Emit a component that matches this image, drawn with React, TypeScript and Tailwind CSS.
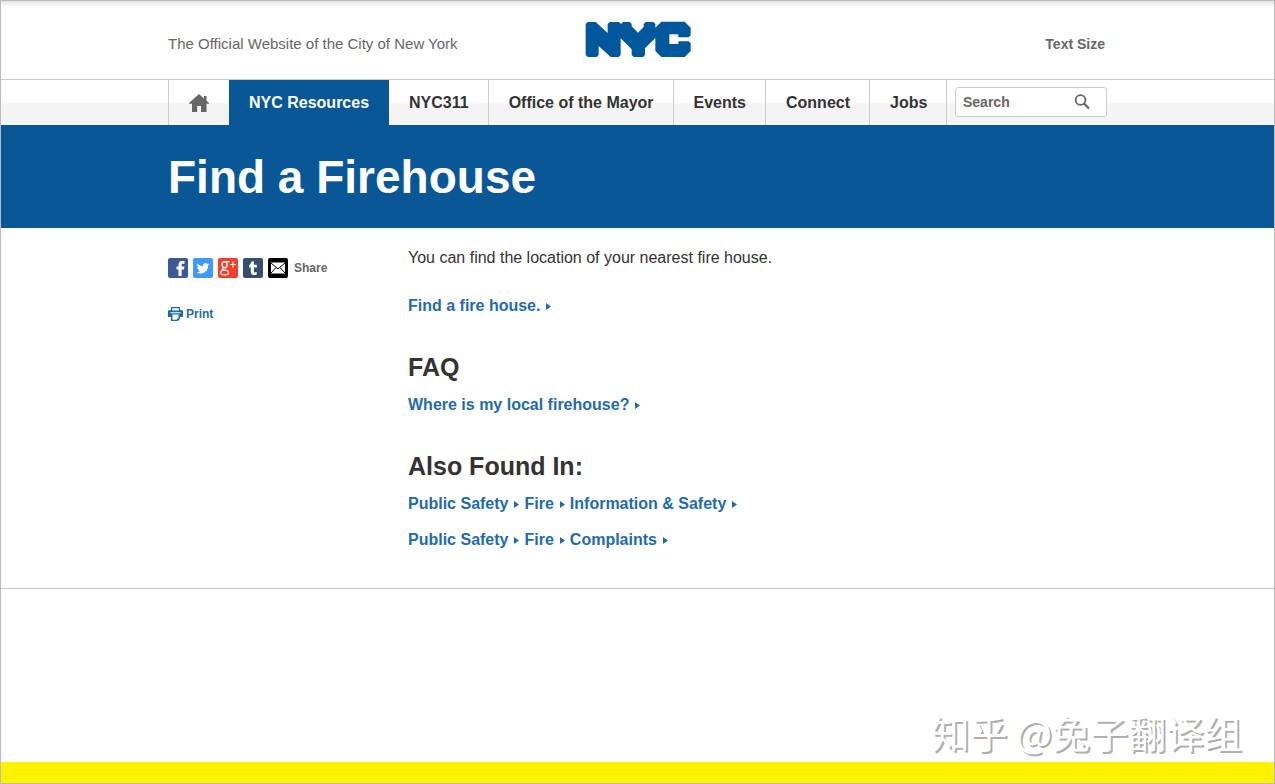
import { useState } from 'react';

type Crumb = { label: string; href: string };

const navItems = [
  { label: 'NYC Resources', active: true },
  { label: 'NYC311' },
  { label: 'Office of the Mayor' },
  { label: 'Events' },
  { label: 'Connect' },
  { label: 'Jobs' },
];

const categories: Crumb[][] = [
  [
    { label: 'Public Safety', href: '#public-safety' },
    { label: 'Fire', href: '#fire' },
    { label: 'Information & Safety', href: '#information' },
  ],
  [
    { label: 'Public Safety', href: '#public-safety' },
    { label: 'Fire', href: '#fire' },
    { label: 'Complaints', href: '#complaints' },
  ],
];

function ArrowLink({ label, href }: Crumb) {
  return (
    <a href={href} className="inline-flex items-center gap-[6px] font-bold text-[#1f6bae] hover:underline">
      {label}
      <svg className="mt-px h-[7px] w-[5px]" viewBox="0 0 5 7" fill="currentColor" aria-hidden="true">
        <path d="M0 0 5 3.500 0 7Z" />
      </svg>
    </a>
  );
}

function Logo() {
  return (
    <svg className="h-[37px] w-[107px] overflow-visible" viewBox="40 66 321 111" fill="#00579c" aria-hidden="true">
      <path d="M48 72 54 66H78L114 99V72L120 66H148L154 72 160 66H180L186 72V79L205 98 222 81V72L228 66H251L257 72V83L275 65H345L363 83V106L357 112H326V103H299V132H326V124H357L363 130V153L345 171H275L257 153V114L226 145V165L220 171H192L186 165V148L153 115V165L147 171H123L87 138V165L81 171H54L48 165Z" />
    </svg>
  );
}

function HomeIcon() {
  return (
    <svg className="h-[18px] w-5" viewBox="0 0 20 18" fill="#666" aria-hidden="true">
      <path d="M10 0 15 4.500V2h2.500v4.800L20 9v.8h-2.500V18H12v-6H8.200v6H3V9.800H0V9Z" />
    </svg>
  );
}

function ShareLinks() {
  const box = 'block h-5 w-5 overflow-hidden rounded-[2px]';
  return (
    <div className="flex items-center gap-[6px]">
      <div className="flex gap-[5px]">
        <a href="#facebook" aria-label="Facebook" className={`${box} bg-[#3b5998]`}>
          <svg viewBox="0 0 20 20" fill="#fff">
            <path d="M10.500 18v-6.500H8.500V8.500h2V6.800c0-2.500 1.400-3.800 3.700-3.800h2.300v2.800H15c-1.100 0-1.400.5-1.400 1.300v1.400h2.800l-.4 3h-2.400V18Z" />
          </svg>
        </a>
        <a href="#twitter" aria-label="Twitter" className={`${box} bg-[#4099ff]`}>
          <svg viewBox="0 0 20 20" fill="#fff">
            <path d="M16.300 6.200c-.5.2-.9.3-1.400.4.5-.3.9-.8 1.100-1.400-.5.3-1 .5-1.600.6a2.600 2.600 0 0 0-4.400 2.400C7.800 8.100 5.900 7.100 4.600 5.500c-.7 1.200-.3 2.700.8 3.500-.4 0-.8-.1-1.200-.3 0 1.200.9 2.300 2.100 2.600-.4.1-.8.1-1.200 0 .3 1 1.300 1.800 2.400 1.800-1.100.9-2.500 1.300-3.900 1.100C8.500 17.300 15.100 14.500 15.100 7.600c.5-.4.9-.8 1.200-1.400Z" />
          </svg>
        </a>
        <a href="#google" aria-label="Google Plus" className={`${box} bg-[#f63e28]`}>
          <svg viewBox="0 0 20 20" fill="none" stroke="#fff" strokeWidth="1.100">
            <ellipse cx="6.600" cy="6.700" rx="2.500" ry="3" strokeWidth="1.400" />
            <path d="M7 3.600h4.500M5.500 9.600c-2 1.200-1.500 2 .5 2.300 3 .4 4.600.8 4.600 2.500 0 1.600-1.900 2.500-4.200 2.500S2.700 16 2.700 14.500c0-1.300 1.300-2.200 3.300-2.600M12 6.500h6M15 3.500v6" />
          </svg>
        </a>
        <a href="#tumblr" aria-label="Tumblr" className={`${box} bg-[#35506b]`}>
          <svg viewBox="0 0 20 20" fill="#fff">
            <path d="M8.200 3.500h2.700v3.300h2.900v2.600h-2.900v3.800c0 1.400 1.300 1.500 2.800.7v2.500c-2.900 1.300-5.900.5-5.900-2.500V9.400H6V7.200C7.400 6.700 8.100 5.400 8.200 3.500Z" />
          </svg>
        </a>
        <a href="#email" aria-label="Email" className={`${box} bg-black`}>
          <svg viewBox="0 0 20 20">
            <path fill="#fff" d="M3 4.500h14v11H3Z" />
            <path fill="none" stroke="#000" d="m3 5 7 6 7-6M3 15l5-5.500M17 15l-5-5.500" />
          </svg>
        </a>
      </div>
      <span className="text-xs font-bold text-[#666]">Share</span>
    </div>
  );
}

function PrintIcon() {
  return (
    <svg className="h-[14px] w-[15px]" viewBox="0 0 15 14" aria-hidden="true">
      <path fill="#1f6bae" d="M3 0h9v3h2l1 1v6h-3v2l-2 2H3v-4H0V4l1-1h2Z" />
      <path fill="#fff" d="M4.200 1.200h6.600V3.400H4.200ZM2.500 5.200h10v1h-10ZM4.500 7.600h6v3.900H8.800v1.300H4.500Z" />
    </svg>
  );
}

export default function App() {
  const [query, setQuery] = useState('');

  return (
    <div className="relative flex min-h-screen flex-col border border-[#bbb] bg-white font-['Liberation_Sans',Arial,sans-serif] text-base text-[#333]">
      {/* Top bar */}
      <header className="bg-linear-to-b from-[#e4e4e4] to-white to-[6px]">
        <div className="mx-auto flex h-[78px] max-w-[939px] items-center">
          <p className="flex-1 pt-2 text-[15px] text-[#666]">The Official Website of the City of New York</p>
          <a href="#nyc" aria-label="NYC">
            <Logo />
          </a>
          <div className="flex flex-1 justify-end pt-2 pr-[2px]">
            <button type="button" className="text-sm font-bold text-[#666]">
              Text Size
            </button>
          </div>
        </div>
      </header>

      {/* Navigation */}
      <nav className="border-t border-[#ccc] bg-linear-to-b from-white from-48% to-[#f4f4f4] to-54%">
        <div className="mx-auto flex h-[45px] max-w-[939px]">
          <a href="#home" aria-label="Home" className="flex w-[61px] items-center justify-center border-l border-[#ccc]">
            <HomeIcon />
          </a>
          {navItems.map((item) => (
            <a
              key={item.label}
              href="#nav"
              className={
                item.active
                  ? 'flex items-center bg-[#095796] px-5 font-bold whitespace-nowrap text-white'
                  : 'flex items-center border-r border-[#ccc] pr-[19px] pl-5 font-bold whitespace-nowrap'
              }
            >
              {item.label}
            </a>
          ))}
          <form className="ml-auto pt-[7px]" onSubmit={(e) => e.preventDefault()}>
            <div className="flex h-[30px] w-[152px] items-center rounded-[3px] border border-[#ccc] bg-white">
              <input
                type="text"
                aria-label="Search"
                placeholder="Search"
                value={query}
                onChange={(e) => setQuery(e.target.value)}
                className="w-full min-w-0 flex-1 px-[7px] text-sm font-bold text-[#666] outline-none placeholder:text-[#666]"
              />
              <button type="submit" aria-label="Submit search" className="mr-4">
                <svg className="h-4 w-4" viewBox="0 0 16 16" fill="none" stroke="#666" strokeWidth="1.800">
                  <circle cx="6.500" cy="6" r="4.900" />
                  <path strokeWidth="2.200" d="m10 9.500 5 5" />
                </svg>
              </button>
            </div>
          </form>
        </div>
      </nav>

      {/* Page title */}
      <div className="bg-[#095796]">
        <div className="mx-auto flex h-[103px] max-w-[939px] items-center pt-0.5">
          <h1 className="text-[46px] font-bold text-white">Find a Firehouse</h1>
        </div>
      </div>

      {/* Content */}
      <main className="border-b border-[#c4c4c4]">
        <div className="mx-auto flex max-w-[939px] pb-9">
          <aside className="w-[240px] shrink-0 pt-[30px]">
            <ShareLinks />
            <a href="#print" className="mt-7 inline-flex items-center gap-[3px] text-xs font-bold text-[#1f6bae]">
              <PrintIcon />
              Print
            </a>
          </aside>

          <div className="flex-1 pt-[18px]">
            <p className="mb-6">You can find the location of your nearest fire house.</p>
            <ArrowLink label="Find a fire house." href="#find" />

            <h2 className="mt-8 mb-2 text-[25px] leading-[35px] font-bold">FAQ</h2>
            <ArrowLink label="Where is my local firehouse?" href="#faq" />

            <h2 className="mt-8 mb-2 text-[25px] leading-[35px] font-bold">Also Found In:</h2>
            <ul className="flex flex-col gap-3">
              {categories.map((trail, i) => (
                <li key={i} className="flex gap-[5px]">
                  {trail.map((crumb) => (
                    <ArrowLink key={crumb.label} {...crumb} />
                  ))}
                </li>
              ))}
            </ul>
          </div>
        </div>
      </main>

      <footer className="mt-auto h-[21px] bg-[#fff200]" />

      {/* Watermark */}
      <div className="absolute right-8 bottom-6 font-['Noto_Sans_CJK_SC',sans-serif] text-[38px] leading-[54px] text-white [text-shadow:2px_2px_0_#b0b0b0]">
        知乎 @兔子翻译组
      </div>
    </div>
  );
}
